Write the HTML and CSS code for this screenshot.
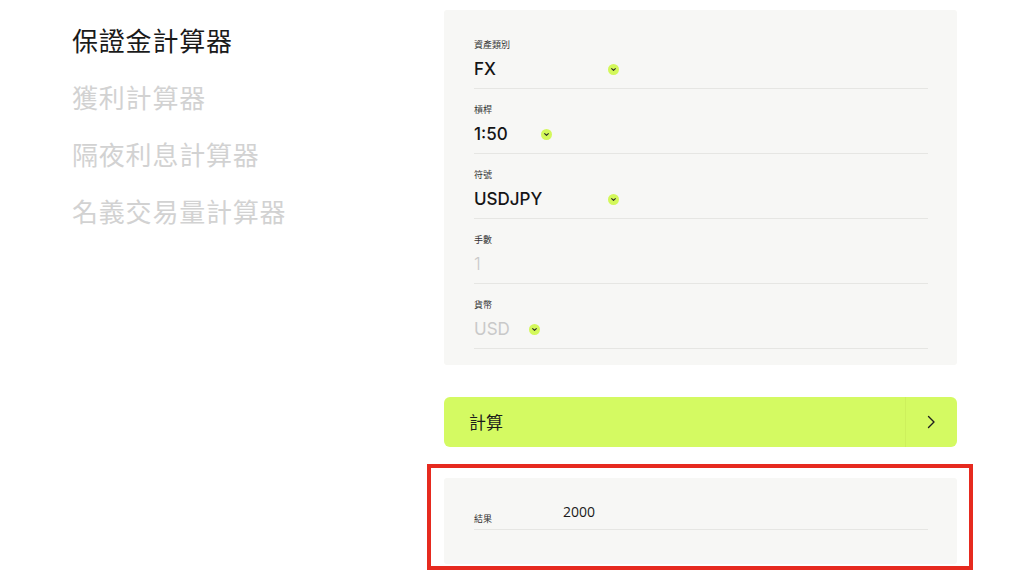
FILE: index.html
```html
<!DOCTYPE html>
<html lang="zh-Hant">
<head>
<meta charset="utf-8">
<link rel="stylesheet" href="styles.css">
</head>
<body>
<div class="page">
  <nav class="nav">
    <div class="nav-item active">保證金計算器</div>
    <div class="nav-item">獲利計算器</div>
    <div class="nav-item">隔夜利息計算器</div>
    <div class="nav-item">名義交易量計算器</div>
  </nav>
  <main class="main">
    <section class="card form">
      <div class="row">
        <div class="label">資產類別</div>
        <div class="value"><span class="val w-fx">FX</span><span class="dd"><svg viewBox="0 0 12 12" width="12" height="12"><circle cx="6" cy="6" r="6" fill="#d3f85a"/><path d="M4 5l2 2 2-2" fill="none" stroke="#2a2a2a" stroke-width="1.2" stroke-linecap="round" stroke-linejoin="round"/></svg></span></div>
      </div>
      <div class="row">
        <div class="label">槓桿</div>
        <div class="value"><span class="val w-lev">1:50</span><span class="dd"><svg viewBox="0 0 12 12" width="12" height="12"><circle cx="6" cy="6" r="6" fill="#d3f85a"/><path d="M4 5l2 2 2-2" fill="none" stroke="#2a2a2a" stroke-width="1.2" stroke-linecap="round" stroke-linejoin="round"/></svg></span></div>
      </div>
      <div class="row">
        <div class="label">符號</div>
        <div class="value"><span class="val w-fx">USDJPY</span><span class="dd"><svg viewBox="0 0 12 12" width="12" height="12"><circle cx="6" cy="6" r="6" fill="#d3f85a"/><path d="M4 5l2 2 2-2" fill="none" stroke="#2a2a2a" stroke-width="1.2" stroke-linecap="round" stroke-linejoin="round"/></svg></span></div>
      </div>
      <div class="row">
        <div class="label">手數</div>
        <div class="value"><span class="val muted light">1</span></div>
      </div>
      <div class="row">
        <div class="label">貨幣</div>
        <div class="value"><span class="val muted w-cur">USD</span><span class="dd"><svg viewBox="0 0 12 12" width="12" height="12"><circle cx="6" cy="6" r="6" fill="#d3f85a"/><path d="M4 5l2 2 2-2" fill="none" stroke="#2a2a2a" stroke-width="1.2" stroke-linecap="round" stroke-linejoin="round"/></svg></span></div>
      </div>
    </section>
    <button class="calc">
      <span class="calc-text">計算</span>
      <span class="calc-arrow"><svg viewBox="0 0 10 14" width="10" height="14"><path d="M2.5 1.5l5.5 5.5-5.5 5.5" fill="none" stroke="#1f1f1f" stroke-width="1.4" stroke-linecap="round" stroke-linejoin="round"/></svg></span>
    </button>
    <div class="highlight">
      <section class="card result">
        <div class="result-row">
          <div class="result-label">結果</div>
          <div class="result-value">2000</div>
        </div>
      </section>
    </div>
  </main>
</div>
</body>
</html>
```
FILE: styles.css
```css
* { box-sizing: border-box; }
html, body { margin: 0; padding: 0; background: #ffffff; }
body {
  font-family: "Inter", "Noto Sans CJK TC", sans-serif;
  color: #1a1a1a;
  width: 1024px;
  height: 576px;
  overflow: hidden;
}
.page {
  display: flex;
  align-items: flex-start;
}
.nav {
  width: 444px;
  padding: 11px 0 0 72px;
  display: flex;
  flex-direction: column;
}
.nav-item {
  font-family: "Noto Sans CJK TC", sans-serif;
  font-size: 26px;
  line-height: 57px;
  color: #d2d2d2;
  letter-spacing: 0.8px;
}
.nav-item.active { color: #1a1a1a; }
.main {
  width: 513px;
  padding-top: 10px;
  display: flex;
  flex-direction: column;
}
.card {
  background: #f7f7f5;
  border-radius: 3px;
}
.form {
  padding: 14px 29px 16px 30px;
}
.row {
  padding: 14px 0 6px;
  border-bottom: 1px solid #e6e6e3;
}
.label {
  font-family: "Noto Sans CJK TC", sans-serif;
  font-size: 9px;
  line-height: 14px;
  color: #333;
}
.value {
  margin-top: 4px;
  height: 26px;
  display: flex;
  align-items: center;
}
.val {
  font-size: 17px;
  font-weight: 500;
  line-height: 26px;
  color: #151515;
}
.val.muted { color: #c9c9c9; font-weight: 400; }
.val.light { font-weight: 300; }
.w-fx { width: 134px; }
.w-lev { width: 67px; }
.w-cur { width: 55px; }
.dd { display: flex; }
.dd svg { display: block; width: 11px; height: 11px; }
.calc {
  margin-top: 32px;
  height: 50px;
  border: none;
  border-radius: 6px;
  background: #d4fa62;
  display: flex;
  align-items: stretch;
  padding: 0;
  font: inherit;
  cursor: pointer;
}
.calc-text {
  flex: 1;
  text-align: left;
  padding-left: 25px;
  font-family: "Noto Sans CJK TC", sans-serif;
  font-size: 17px;
  line-height: 50px;
  color: #1c1c1c;
}
.calc-arrow {
  width: 52px;
  border-left: 1px solid #cdf05c;
  display: flex;
  align-items: center;
  justify-content: center;
}
.calc-arrow svg { display: block; margin-left: -2px; }
.highlight {
  margin: 17px -16px 0 -17px;
  border: 4px solid #e62a1f;
  padding: 10px 12px 2px 13px;
}
.result {
  height: 86px;
  padding: 24px 29px 0 30px;
}
.result-row {
  display: flex;
  align-items: flex-end;
  height: 28px;
  border-bottom: 1px solid #e6e6e3;
}
.result-label {
  width: 89px;
  font-family: "Noto Sans CJK TC", sans-serif;
  font-size: 9px;
  line-height: 14px;
  margin-bottom: 3px;
  color: #333;
}
.result-value {
  font-family: "Open Sans", "Noto Sans", sans-serif;
  font-size: 14px;
  line-height: 20px;
  margin-bottom: 7px;
  color: #1a1a1a;
}
```
